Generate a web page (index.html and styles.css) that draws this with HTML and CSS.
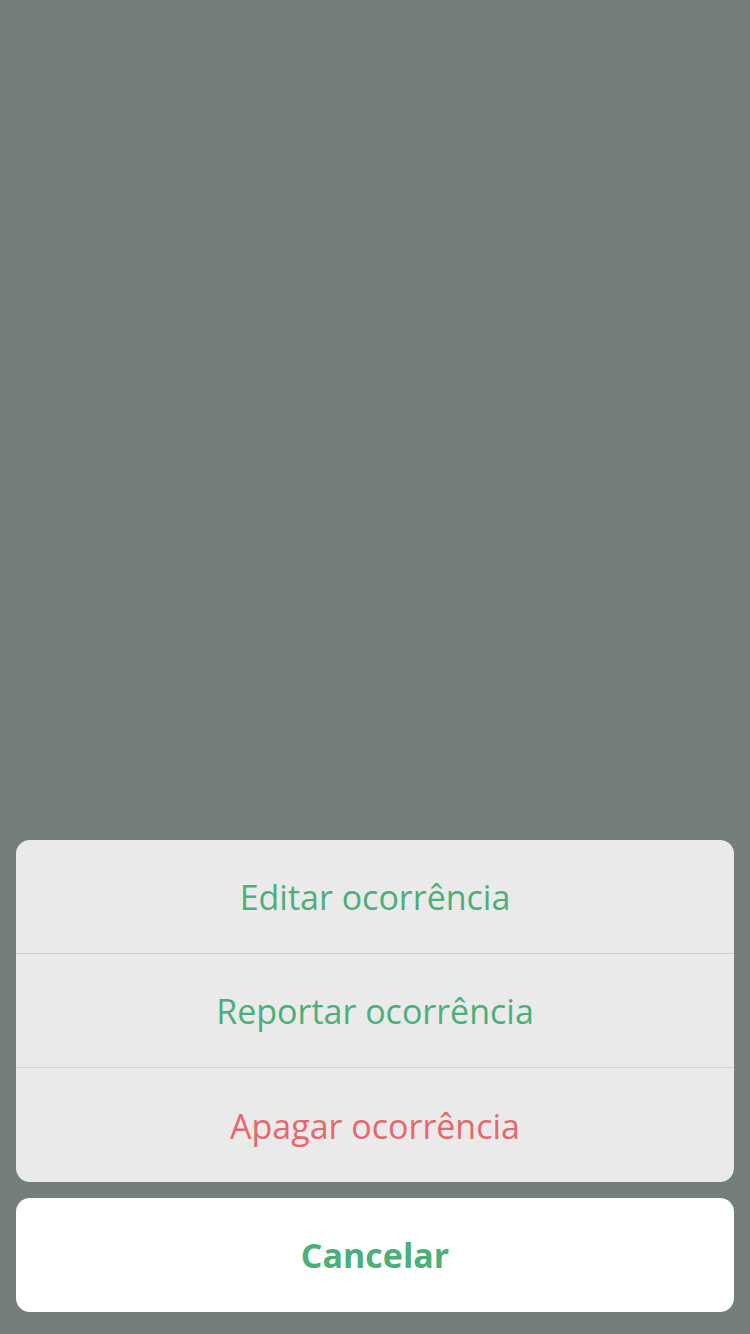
FILE: index.html
```html
<!DOCTYPE html>
<html lang="pt">
<head>
<meta charset="utf-8">
<title>Ações</title>
<link rel="stylesheet" href="styles.css">
</head>
<body>
<div class="screen">
  <div class="sheet">
    <div class="group">
      <button class="action">Editar ocorrência</button>
      <button class="action">Reportar ocorrência</button>
      <button class="action danger">Apagar ocorrência</button>
    </div>
    <button class="cancel">Cancelar</button>
  </div>
</div>
</body>
</html>
```
FILE: styles.css
```css
html, body {
  margin: 0;
  padding: 0;
}
body {
  background: #737f78;
  font-family: "Open Sans", "Liberation Sans", sans-serif;
}
.screen {
  width: 750px;
  height: 1334px;
  display: flex;
  flex-direction: column;
  justify-content: flex-end;
  box-sizing: border-box;
  padding: 0 16px 22px;
}
.sheet {
  display: flex;
  flex-direction: column;
  gap: 16px;
}
.group {
  background: #e9eae9;
  border-radius: 14px;
  overflow: hidden;
  display: flex;
  flex-direction: column;
}
.action, .cancel {
  box-sizing: border-box;
  border: 0;
  margin: 0;
  padding: 0;
  font-family: inherit;
  width: 100%;
  height: 114px;
  display: flex;
  align-items: center;
  justify-content: center;
  color: #4caf79;
  font-size: 34px;
  background: transparent;
}
.action:first-child {
  height: 113px;
}
.action + .action {
  border-top: 1px solid #cfd1cf;
  padding-top: 1px;
}
.action.danger {
  height: 115px;
  color: #e8676d;
}
.cancel {
  background: #ffffff;
  border-radius: 14px;
  font-weight: 700;
  font-size: 34px;
}
```
